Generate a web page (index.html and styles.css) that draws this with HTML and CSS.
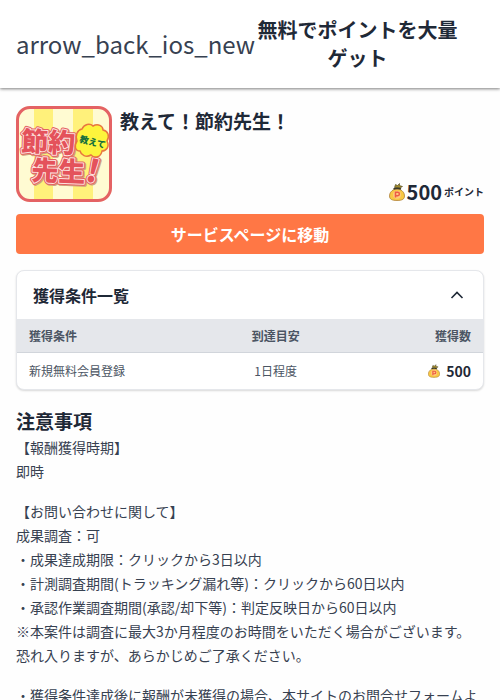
FILE: index.html
```html
<!DOCTYPE html>
<html lang="ja">
<head>
<meta charset="utf-8">
<meta name="viewport" content="width=device-width, initial-scale=1">
<title>無料でポイントを大量ゲット</title>
<link rel="stylesheet" href="styles.css">
</head>
<body>
<svg class="symbols" aria-hidden="true">
  <symbol id="bag" viewBox="0 0 16 18">
    <path d="M5.500 4.500 6.500 1.500 8.500 2.500 10.500.5 10.500 2.500 13.500 3.500 11 5z" fill="#a08a2c" stroke="#48411d" stroke-width=".6"/>
    <path d="M5 6.500C2 8 .5 10 .5 13c0 3 2 4.500 7.500 4.500s7.500-1.500 7.500-4.500c0-3-1.500-5-4.500-6.500z" fill="#f8c843" stroke="#a8752c" stroke-width=".7"/>
    <path d="M4.500 6Q8 4.500 12 6" fill="none" stroke="#3b3926" stroke-width="1.400"/>
    <circle cx="8" cy="11.800" r="4" fill="#ffc97a"/>
    <path d="M6.500 14.500V9.300h2.200a1.700 1.700 0 0 1 0 3.400H6.500" fill="none" stroke="#ed5b45" stroke-width="1.500"/>
  </symbol>
</svg>
<header class="header">
  <a class="back" href="#">arrow_back_ios_new</a>
  <h1 class="header-title">無料でポイントを大量ゲット</h1>
</header>
<main class="main">
  <section class="offer">
    <svg class="logo" viewBox="0 0 96 96" role="img" aria-label="教えて！節約先生！">
      <defs>
        <g id="word">
          <text x="5" y="45" font-size="27" transform="rotate(2 5 45)">節約</text>
          <text x="15" y="74" font-size="27" transform="rotate(2 15 74)">先生</text>
          <text x="70" y="76" font-size="31" transform="rotate(14 75 68)">!</text>
        </g>
      </defs>
      <rect width="96" height="96" rx="14" fill="#fffbd2"/>
      <path fill="#fff17b" d="M18 2h19v92H18zM57 2h20v92H57z"/>
      <rect x="1.500" y="1.500" width="93" height="93" rx="12.500" fill="none" stroke="#e46264" stroke-width="3"/>
      <use class="logo-shadow" href="#word" x="1" y="1"/>
      <use class="logo-outline" href="#word"/>
      <use class="logo-word" href="#word"/>
      <path d="M66 23c2-5 8-6 11-3 5-3 10 0 10 4 5 1 7 6 4 11 3 6-1 10-5 10-1 6-7 8-11 4-5 3-10 0-11-4-5 0-6-5-3-10-2-5 0-11 5-12z" fill="#fdf43c" stroke="#e8763f" stroke-width="1.500"/>
      <text class="logo-badge" x="63" y="36" font-size="9" transform="rotate(14 63 36)">教えて</text>
    </svg>
    <div class="offer-info">
      <h2 class="heading">教えて！節約先生！</h2>
      <p class="reward"><svg class="bag"><use href="#bag"/></svg><strong class="amount">500</strong><span class="unit">ポイント</span></p>
    </div>
  </section>
  <a class="cta" href="#">サービスページに移動</a>
  <section class="card">
    <button class="card-toggle" type="button" aria-expanded="true" aria-controls="conditions">獲得条件一覧
      <svg class="chevron" viewBox="0 0 14 14" aria-hidden="true"><path d="m1.500 10 5.500-5.500 5.500 5.500" fill="none" stroke="currentColor" stroke-width="1.600"/></svg>
    </button>
    <table class="conditions" id="conditions">
      <thead><tr><th>獲得条件</th><th>到達目安</th><th>獲得数</th></tr></thead>
      <tbody><tr><td>新規無料会員登録</td><td>1日程度</td><td><span class="points"><svg class="bag-small"><use href="#bag"/></svg>500</span></td></tr></tbody>
    </table>
  </section>
  <section class="notes">
    <h2 class="heading">注意事項</h2>
    <p>【報酬獲得時期】<br>即時</p>
    <p>【お問い合わせに関して】<br>成果調査：可<br>・成果達成期限：クリックから3日以内<br>・計測調査期間(トラッキング漏れ等)：クリックから60日以内<br>・承認作業調査期間(承認/却下等)：判定反映日から60日以内<br>※本案件は調査に最大3か月程度のお時間をいただく場合がございます。<br>恐れ入りますが、あらかじめご了承ください。</p>
    <p>・獲得条件達成後に報酬が未獲得の場合、本サイトのお問合せフォームよ</p>
  </section>
</main>
</body>
</html>
```
FILE: styles.css
```css
* {
  box-sizing: border-box;
}

body,
h1,
h2,
p {
  margin: 0;
}

body {
  background: #fefefe;
  color: #374151;
  font-family: "Noto Sans CJK JP", sans-serif;
  font-size: 14px;
  line-height: 24px;
}

.symbols {
  display: none;
}

.header {
  display: flex;
  align-items: center;
  padding: 16px 40px 16px 16px;
  background: #fff;
  box-shadow: 0 1px 3px rgba(0, 0, 0, .5);
}

.back {
  color: #374151;
  font-size: 24px;
  line-height: 32px;
  text-decoration: none;
}

.header-title {
  flex: 1;
  color: #1f2937;
  font-size: 20px;
  line-height: 28px;
  text-align: center;
}

.main {
  padding: 18px 16px;
}

.offer {
  display: flex;
  gap: 8px;
}

.logo {
  flex: none;
  width: 96px;
  height: 96px;
}

.logo text {
  font-weight: 900;
}

.logo-word {
  fill: #e4525b;
  stroke: #fde0dc;
  stroke-width: 2px;
  stroke-linejoin: round;
  paint-order: stroke;
}

.logo-outline {
  fill: #e46264;
  stroke: #e46264;
  stroke-width: 4px;
  stroke-linejoin: round;
}

.logo-shadow {
  fill: #cfa27c;
  stroke: #cfa27c;
  stroke-width: 4px;
  stroke-linejoin: round;
}

.logo-badge {
  fill: #16703d;
}

.offer-info {
  display: flex;
  flex: 1;
  flex-direction: column;
  justify-content: space-between;
}

.heading {
  color: #1f2937;
  font-size: 19px;
  line-height: 29px;
}

.reward {
  display: flex;
  align-items: center;
  justify-content: flex-end;
  gap: 2px;
  color: #1f2937;
  line-height: 20px;
}

.bag {
  width: 16px;
  height: 18px;
}

.amount {
  font-size: 20px;
}

.unit {
  font-size: 10px;
  font-weight: 700;
}

.cta {
  display: block;
  margin: 12px 0 16px;
  padding: 8px;
  border-radius: 4px;
  background: #ff7745;
  color: #fff;
  font-size: 16px;
  font-weight: 700;
  text-align: center;
  text-decoration: none;
}

.card {
  overflow: hidden;
  border: 1px solid #e5e7eb;
  border-radius: 8px;
  background: #fff;
  box-shadow: 0 1px 2px rgba(0, 0, 0, .15);
}

.card-toggle {
  display: flex;
  align-items: center;
  justify-content: space-between;
  width: 100%;
  padding: 12px 19px 12px 16px;
  border: 0;
  background: none;
  color: #1f2937;
  font: inherit;
  font-size: 16px;
  font-weight: 700;
}

.chevron {
  width: 14px;
  height: 14px;
}

.conditions {
  width: 100%;
  border-spacing: 0;
  font-size: 12px;
  line-height: 17px;
  text-align: center;
}

.conditions th {
  padding: 8px 12px;
  border-bottom: 1px solid #d1d5db;
  background: #e5e7eb;
  color: #4b5563;
}

.conditions td {
  padding: 8px 12px;
  color: #4b5563;
  line-height: 20px;
}

.conditions th:first-child,
.conditions td:first-child {
  width: 40%;
  text-align: left;
}

.conditions th:last-child,
.conditions td:last-child {
  width: 29%;
  text-align: right;
}

.points {
  display: flex;
  align-items: center;
  justify-content: flex-end;
  gap: 6px;
  color: #1f2937;
  font-size: 14px;
  font-weight: 700;
}

.bag-small {
  width: 12px;
  height: 14px;
}

.notes {
  margin-top: 16px;
}

.notes p {
  margin-bottom: 16px;
}
```
